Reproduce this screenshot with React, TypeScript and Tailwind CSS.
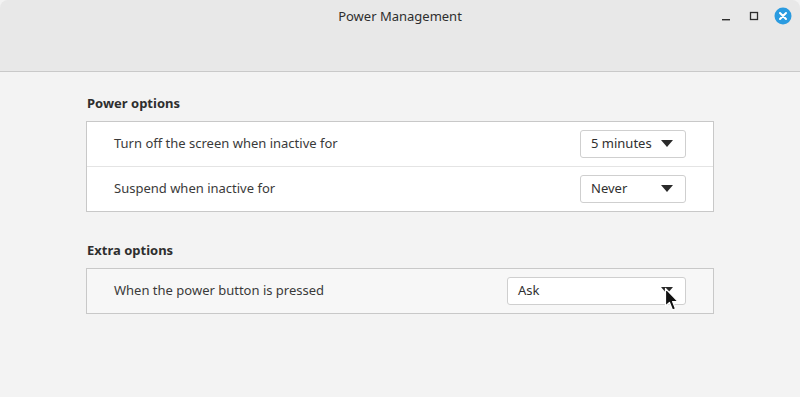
import { ReactNode } from "react";

const font = { fontFamily: '"Noto Sans", "Open Sans", sans-serif' };

function Combo({ label, width }: { label: string; width: string }) {
  return (
    <div
      className={`${width} h-[28px] flex items-center justify-between pl-[10px] pr-[12px] bg-white border border-[#cfcfcf] rounded-[3px] text-[13px] text-[#303030]`}
    >
      <span>{label}</span>
      <svg width="12" height="8" viewBox="0 0 12 8">
        <path d="M0 0 H12 L6 7 Z" fill="#2a2a2a" />
      </svg>
    </div>
  );
}

function Row({ text, children, last }: { text: string; children: ReactNode; last?: boolean }) {
  return (
    <div
      className={`flex items-center justify-between pl-[27px] pr-[27px] ${last ? "h-[44px]" : "h-[45px] border-b border-[#e4e4e4]"}`}
    >
      <span className="text-[13px] text-[#3a3a3a]">{text}</span>
      {children}
    </div>
  );
}

function Cursor() {
  return (
    <svg className="absolute left-[664px] top-[287px]" width="18" height="26" viewBox="0 0 18 26">
      <path
        d="M1.5 1.5 L1.5 19 L5.5 15.5 L8.5 23 L11.5 21.8 L8.6 14.5 L14 14.5 Z"
        fill="#111"
        stroke="#fff"
        strokeWidth="1.2"
        strokeLinejoin="round"
      />
    </svg>
  );
}

export default function App() {
  return (
    <div className="relative w-[800px] h-[397px] bg-[#f3f3f3] overflow-hidden" style={font}>
      <div className="h-[72px] bg-[#e8e8e8] border-b border-[#c9c9c9] rounded-t-[8px] relative">
        <div className="text-center pt-[7px] text-[13px] text-[#2e2e2e]">Power Management</div>
        <div className="absolute right-[8px] top-[7px] flex items-center gap-[12px]">
          <svg width="16" height="16" viewBox="0 0 16 16">
            <rect x="4" y="11" width="8" height="1.4" fill="#2e2e2e" />
          </svg>
          <svg width="16" height="16" viewBox="0 0 16 16">
            <rect x="4.5" y="4.5" width="7" height="7" fill="none" stroke="#2e2e2e" strokeWidth="1.3" />
          </svg>
          <svg width="18" height="18" viewBox="0 0 18 18">
            <circle cx="9" cy="9" r="8.5" fill="#2a9be0" />
            <path d="M6 6 L12 12 M12 6 L6 12" stroke="#fff" strokeWidth="2" strokeLinecap="round" />
          </svg>
        </div>
      </div>

      <div className="pl-[86px] pr-[86px] pt-[22px]">
        <div className="text-[13px] font-bold text-[#2e2e2e] pl-[1px] h-[18px] leading-[18px]">Power options</div>
        <div className="mt-[9px] bg-white border border-[#c8c8c8]">
          <Row text="Turn off the screen when inactive for">
            <Combo label="5 minutes" width="w-[106px]" />
          </Row>
          <Row text="Suspend when inactive for" last>
            <Combo label="Never" width="w-[106px]" />
          </Row>
        </div>

        <div className="mt-[29px] text-[13px] font-bold text-[#2e2e2e] pl-[1px] h-[18px] leading-[18px]">
          Extra options
        </div>
        <div className="mt-[9px] bg-[#f7f7f7] border border-[#c8c8c8]">
          <Row text="When the power button is pressed" last>
            <Combo label="Ask" width="w-[179px]" />
          </Row>
        </div>
      </div>
      <Cursor />
    </div>
  );
}
